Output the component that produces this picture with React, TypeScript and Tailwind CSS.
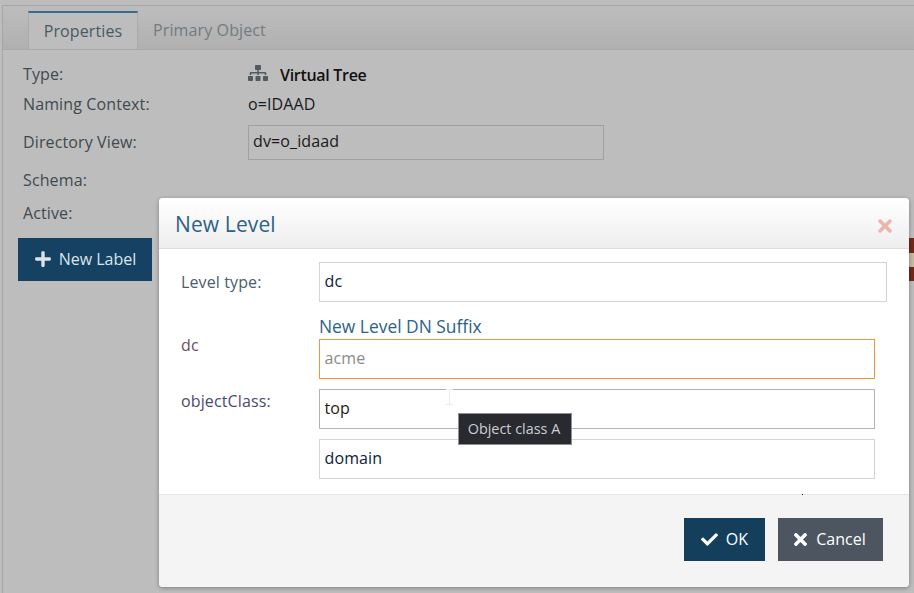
import React from "react";
import { FaSitemap, FaPlus, FaTimes, FaCheck } from "react-icons/fa";

function Row({ label, h, children }: { label: string; h: string; children?: React.ReactNode }) {
  return (
    <div className={`flex items-center ${h}`}>
      <div className="w-[225px] shrink-0 text-[#404a50]">{label}</div>
      {children}
    </div>
  );
}

function Field({ value, cls = "border-[#d4d4d4]", text = "text-[#0d1c3c]" }: { value: string; cls?: string; text?: string }) {
  return <div className={`flex h-10 items-center border px-[4.5px] pb-0.5 ${cls} ${text}`}>{value}</div>;
}

export default function App() {
  return (
    <div className="relative h-[593px] w-[914px] overflow-hidden bg-[#bdbdbd] pl-0.5 pt-[5px] text-base tracking-[0.12px] font-['Open_Sans',sans-serif]">
      <div className="h-full border-l border-t border-[#a6a6a6]">
        <div className="flex h-[44px] items-end border-b border-[#a9a9a9] bg-gradient-to-b from-[#bdbdbd] to-[#b0b0b0] pl-[25px]">
          <div className="flex h-[38px] w-[110px] items-center justify-center border-x border-t-2 border-x-[#a3adb3] border-t-[#386d92] bg-[#bdbdbd] text-[#465a66]">Properties</div>
          <div className="flex h-[38px] items-center pl-[15px] text-[#737b80]">Primary Object</div>
        </div>
        <div className="pl-5 pt-[9px]">
          <Row label="Type:" h="h-[30px]">
            <div className="flex items-center gap-3 pt-0.5 font-semibold tracking-[-0.3px] text-[#111]">
              <FaSitemap className="mb-1 text-[20px] text-[#505a5f]" />
              <span>Virtual Tree</span>
            </div>
          </Row>
          <Row label="Naming Context:" h="h-[30px]"><span className="text-[#1a1a1a]">o=IDAAD</span></Row>
          <Row label="Directory View:" h="h-[46px]">
            <div className="flex h-[35px] w-[356px] items-center border border-[#a0a0a0] px-1 pb-0.5 text-[#1a1a1a]">dv=o_idaad</div>
          </Row>
          <Row label="Schema:" h="h-[30px]" />
          <Row label="Active:" h="h-[36px]" />
        </div>
        <div className="ml-[15px] mt-[7px] flex items-center justify-between">
          <div className="flex h-[43px] w-[134px] items-center justify-center gap-[7px] bg-[#154262] pb-0.5 tracking-normal text-[#dbe4ea]">
            <FaPlus className="text-[18px]" />
            <span>New Label</span>
          </div>
          <div className="flex h-[43px] w-[5px] items-center bg-[#6e2a1a]">
            <div className="h-3.5 w-[5px] bg-[#c4bba4]" />
          </div>
        </div>
      </div>

      <div className="absolute left-[159px] top-[198px] flex h-[389px] w-[750px] flex-col overflow-hidden rounded-[4px] bg-white shadow-[0_1px_4px_rgba(0,0,0,0.35)]">
        <div className="flex h-[51px] shrink-0 items-center justify-between border-b border-[#dddddd] bg-gradient-to-b from-white to-[#eeeeee] pl-4 pr-3.5">
          <span className="pt-1 text-[21px] text-[#2c6288]">New Level</span>
          <FaTimes className="mt-1.5 text-[20px] text-[#ebb5ad]" />
        </div>
        <div className="flex-1 px-[22px] pt-[13px]">
          <div className="flex">
            <div className="flex h-10 w-[138px] shrink-0 items-center text-[#47606e]">Level type:</div>
            <div className="flex-1"><Field value="dc" /></div>
          </div>
          <div className="mt-[13px] flex">
            <div className="flex w-[138px] shrink-0 flex-col text-[#6b4a6c]">
              <div className="mt-[10px] flex h-10 items-center">dc</div>
              <div className="mt-[22px] flex h-10 items-center pb-3 text-[#4a4a70]">objectClass:</div>
            </div>
            <div className="flex-1 pr-3">
              <div className="h-6 text-[17.4px] leading-[22px] tracking-normal text-[#2c6288]">New Level DN Suffix</div>
              <Field value="acme" cls="border-[#f0963a]" text="text-[#8a8a8a]" />
              <div className="mt-2.5"><Field value="top" cls="border-[#b4b4b4]" text="text-[#2a1a10]" /></div>
              <div className="mt-2.5"><Field value="domain" /></div>
            </div>
          </div>
        </div>
        <div className="flex h-[93px] shrink-0 items-start justify-end gap-[13px] border-t border-[#e6e6e6] bg-[#f4f4f4] pr-[26px] pt-[23px]">
          <div className="flex h-[43px] w-[81px] items-center justify-center gap-2 bg-[#133f5c] pb-px text-white">
            <FaCheck className="text-[17px]" />
            <span>OK</span>
          </div>
          <div className="flex h-[43px] w-[105px] items-center justify-center gap-1.5 bg-[#4d5560] pb-px pr-1 tracking-normal text-white">
            <FaTimes className="text-[19px]" />
            <span>Cancel</span>
          </div>
        </div>
      </div>

      <div className="absolute left-[458px] top-[413px] flex h-[32px] w-[114px] items-center justify-center border border-[#8e9094] bg-[#282a2f] pr-0.5 text-[14.4px] tracking-normal text-[#c9ced6]">Object class A</div>
      <div className="absolute left-[446px] top-[389px] flex h-4 w-[7px] flex-col items-center justify-between">
        <div className="h-px w-[7px] bg-[#ececec]" />
        <div className="h-3.5 w-px bg-[#ececec]" />
        <div className="h-px w-[7px] bg-[#ececec]" />
      </div>
      <div className="absolute left-[802px] top-[494px] h-px w-px bg-[#222]" />
    </div>
  );
}
